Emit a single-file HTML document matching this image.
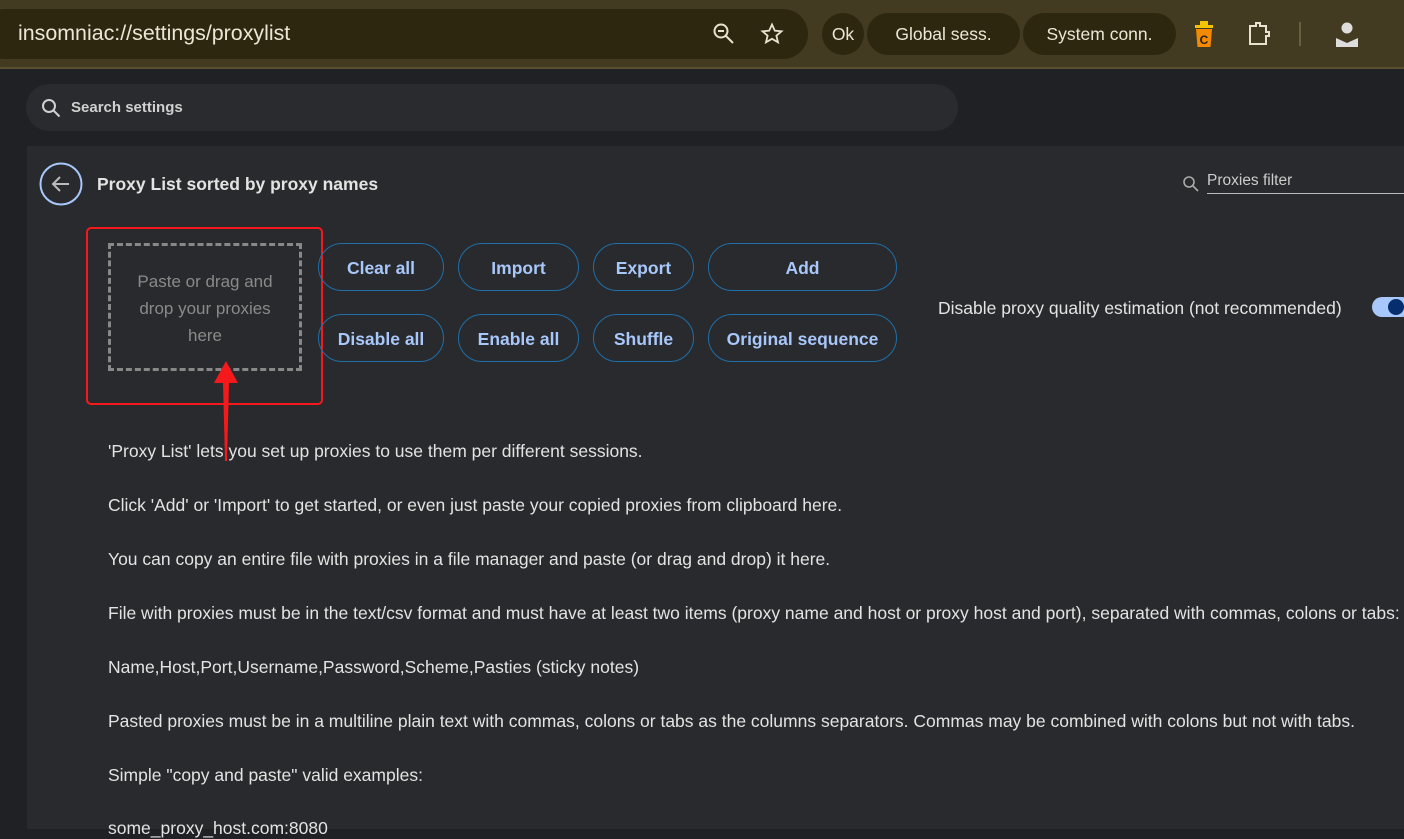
<!DOCTYPE html>
<html><head><meta charset="utf-8"><style>
*{margin:0;padding:0;box-sizing:border-box}
body{width:1404px;height:829px;overflow:hidden;background:#202124;font-family:"Liberation Sans",sans-serif;color:#e3e3e3;position:relative}
.top{position:absolute;left:0;top:0;width:1404px;height:69px;background:#433b21;border-bottom:2px solid #5a5030}
.url{position:absolute;left:-20px;top:9px;width:828px;height:50px;border-radius:25px;background:#2d2710}
.url span{position:absolute;left:38px;top:12px;font-size:21.4px;color:#ece6d6}
.pill{position:absolute;top:13px;height:42px;border-radius:21px;background:#2d2710;color:#ece6d6;font-size:17.5px;line-height:42px;text-align:center}
.search{position:absolute;left:26px;top:84px;width:932px;height:47px;border-radius:24px;background:#2a2b2e}
.search span{position:absolute;left:45px;top:15px;font-size:15px;color:#d0d0d0;font-weight:bold}
.card{position:absolute;left:27px;top:146px;width:1377px;height:683px;background:#292a2d}
.t{position:absolute;white-space:nowrap;font-size:17.5px;color:#e3e3e3}
.btn{position:absolute;height:48px;border:1px solid #1f6fa8;border-radius:24px;color:#a8c7fa;font-weight:bold;font-size:17.5px;text-align:center;line-height:48px}
</style></head><body>
<div class="top">
 <div class="url"><span>insomniac://settings/proxylist</span></div>
 <svg style="position:absolute;left:712px;top:22px" width="24" height="24" viewBox="0 0 24 24" fill="none" stroke="#e8e2d0" stroke-width="2"><circle cx="9" cy="9" r="6.5"/><path d="M14 14l7 7M6 9h6"/></svg>
 <svg style="position:absolute;left:760px;top:22px" width="24" height="24" viewBox="0 0 24 24" fill="none" stroke="#e8e2d0" stroke-width="1.8"><path d="M12 2.5l2.8 6.2 6.7.6-5.1 4.4 1.6 6.6L12 16.8l-6 3.5 1.6-6.6-5.1-4.4 6.7-.6z"/></svg>
 <div class="pill" style="left:822px;width:42px">Ok</div>
 <div class="pill" style="left:867px;width:153px">Global sess.</div>
 <div class="pill" style="left:1023px;width:153px">System conn.</div>
 <svg style="position:absolute;left:1193px;top:20px" width="22" height="28" viewBox="0 0 22 28"><rect x="7" y="1" width="8" height="4" fill="#f5c400"/><rect x="2" y="5" width="18" height="3" fill="#f5c400"/><path d="M3 9h16l-1.5 18h-13z" fill="#f58a00"/><text x="11" y="24" font-size="12" font-weight="bold" text-anchor="middle" fill="#222" font-family="Liberation Sans">C</text></svg>
 <svg style="position:absolute;left:1246px;top:20px" width="28" height="28" viewBox="0 0 28 28" fill="none" stroke="#e8e2d0" stroke-width="2"><path d="M4 6h6v-3h4v3h6v6h3v4h-3v8h-16z"/></svg>
 <div style="position:absolute;left:1299px;top:22px;width:2px;height:24px;background:#6a6040"></div>
 <svg style="position:absolute;left:1334px;top:20px" width="26" height="28" viewBox="0 0 26 28"><circle cx="13" cy="8" r="5.5" fill="#ddd"/><path d="M2 27v-9l11 5 11-5v9z" fill="#ddd"/></svg>
</div>
<div class="search">
 <svg style="position:absolute;left:14px;top:13px" width="22" height="22" viewBox="0 0 22 22" fill="none" stroke="#d0d0d0" stroke-width="2"><circle cx="9" cy="9" r="6"/><path d="M13.5 13.5l6 6"/></svg>
 <span>Search settings</span>
</div>
<div class="card">
 <svg style="position:absolute;left:12px;top:16px" width="44" height="44" viewBox="0 0 44 44" fill="none"><circle cx="22" cy="22" r="20.5" stroke="#a8c7fa" stroke-width="2"/><path d="M30 22H14M21 15l-7 7 7 7" stroke="#bbb" stroke-width="2"/></svg>
 <div class="t" style="left:70px;top:28px;font-weight:bold;font-size:17.5px">Proxy List sorted by proxy names</div>
 <svg style="position:absolute;left:1155px;top:29px" width="18" height="18" viewBox="0 0 18 18" fill="none" stroke="#aaa" stroke-width="1.6"><circle cx="7" cy="7" r="5"/><path d="M11 11l5 5"/></svg>
 <div class="t" style="left:1180px;top:26px;font-size:15.5px;color:#ccc">Proxies filter</div>
 <div style="position:absolute;left:1180px;top:47px;width:200px;height:1px;background:#bbb"></div>
 <div style="position:absolute;left:59px;top:81px;width:237px;height:178px;border:2px solid #f5191b;border-radius:5px"></div>
 <div style="position:absolute;left:81px;top:97px;width:194px;height:128px;border:3px dashed #888"></div>
 <div class="t" style="left:93px;top:122px;width:170px;text-align:center;white-space:normal;color:#8a8a8a;line-height:27px;font-size:17px">Paste or drag and drop your proxies here</div>
 <svg style="position:absolute;left:184px;top:215px" width="30" height="100" viewBox="0 0 30 100"><path d="M15 0L27 22H18L16 100H14L12 22H3z" fill="#f5191b"/></svg>
 <div class="btn" style="left:291px;top:97px;width:126px">Clear all</div>
 <div class="btn" style="left:431px;top:97px;width:121px">Import</div>
 <div class="btn" style="left:566px;top:97px;width:101px">Export</div>
 <div class="btn" style="left:681px;top:97px;width:189px">Add</div>
 <div class="btn" style="left:291px;top:168px;width:126px">Disable all</div>
 <div class="btn" style="left:431px;top:168px;width:121px">Enable all</div>
 <div class="btn" style="left:566px;top:168px;width:101px">Shuffle</div>
 <div class="btn" style="left:681px;top:168px;width:189px">Original sequence</div>
 <div class="t" style="left:911px;top:152px">Disable proxy quality estimation (not recommended)</div>
 <div style="position:absolute;left:1345px;top:151px;width:40px;height:20px;border-radius:10px;background:#a8c7fa"></div>
 <div style="position:absolute;left:1361px;top:153px;width:16px;height:16px;border-radius:8px;background:#062e6f"></div>
 <div class="t" style="left:81px;top:295px">'Proxy List' lets you set up proxies to use them per different sessions.</div>
 <div class="t" style="left:81px;top:349px">Click 'Add' or 'Import' to get started, or even just paste your copied proxies from clipboard here.</div>
 <div class="t" style="left:81px;top:403px">You can copy an entire file with proxies in a file manager and paste (or drag and drop) it here.</div>
 <div class="t" style="left:81px;top:457px">File with proxies must be in the text/csv format and must have at least two items (proxy name and host or proxy host and port), separated with commas, colons or tabs:</div>
 <div class="t" style="left:81px;top:511px">Name,Host,Port,Username,Password,Scheme,Pasties (sticky notes)</div>
 <div class="t" style="left:81px;top:565px">Pasted proxies must be in a multiline plain text with commas, colons or tabs as the columns separators. Commas may be combined with colons but not with tabs.</div>
 <div class="t" style="left:81px;top:619px">Simple "copy and paste" valid examples:</div>
 <div class="t" style="left:81px;top:672px">some_proxy_host.com:8080</div>
</div>
</body></html>
